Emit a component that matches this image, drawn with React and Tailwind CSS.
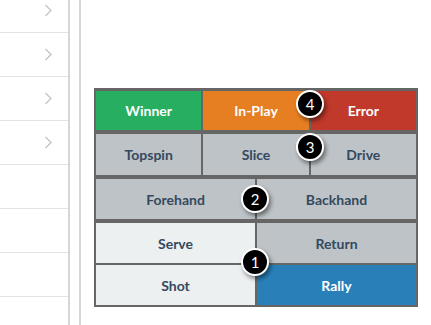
import React from "react";

const Chevron = () => (
  <svg width="9" height="13" viewBox="0 0 9 13" className="block">
    <polyline points="1.5,1 7,6.5 1.5,12" fill="none" stroke="#c4c4c8" strokeWidth="1.3" />
  </svg>
);

const Badge = ({ n, x, y }) => (
  <div
    className="absolute w-[28px] h-[28px] rounded-full bg-black border-2 border-white flex items-center justify-center text-white text-[15px] leading-none shadow-[2px_3px_4px_rgba(0,0,0,0.45)]"
    style={{ left: x - 14, top: y - 14 }}
  >
    {n}
  </div>
);

const Cell = ({ children, cls }) => (
  <div className={`flex items-center justify-center font-bold text-[14px] ${cls}`}>{children}</div>
);

export default function App() {
  const rows = [true, true, true, true, false, false, false, false];
  return (
    <div className="w-[431px] h-[325px] overflow-hidden bg-white flex" style={{ fontFamily: "Lato, 'Liberation Sans', sans-serif" }}>
      <div className="w-[70px] shrink-0 border-r-2 border-[#d6d6d6] flex flex-col">
        <div className="-mt-[11px] flex flex-col">
          {rows.map((c, i) => (
            <div key={i} className="h-[44px] shrink-0 border-b border-[#e3e3e3] flex items-center justify-end pr-[15px]">
              {c && <Chevron />}
            </div>
          ))}
        </div>
      </div>
      <div className="w-[9px] shrink-0" />
      <div className="flex-1 border-l-2 border-[#d6d6d6] pl-[13px] pt-[88px]">
        <div className="relative w-[324px] bg-[#666666] pt-[3px] px-[2px] pb-[2px] flex flex-col">
          <div className="grid grid-cols-3 gap-[2px] h-[39px]">
            <Cell cls="bg-[#27ae60] text-white">Winner</Cell>
            <Cell cls="bg-[#e67e22] text-white">In-Play</Cell>
            <Cell cls="bg-[#c0392b] text-white">Error</Cell>
          </div>
          <div className="grid grid-cols-3 gap-[2px] h-[41px] mt-[4px]">
            <Cell cls="bg-[#bdc3c7] text-[#34495e]">Topspin</Cell>
            <Cell cls="bg-[#bdc3c7] text-[#34495e]">Slice</Cell>
            <Cell cls="bg-[#bdc3c7] text-[#34495e]">Drive</Cell>
          </div>
          <div className="grid grid-cols-2 gap-[2px] h-[40px] mt-[4px]">
            <Cell cls="bg-[#bdc3c7] text-[#34495e]">Forehand</Cell>
            <Cell cls="bg-[#bdc3c7] text-[#34495e]">Backhand</Cell>
          </div>
          <div className="grid grid-cols-2 gap-[2px] h-[40px] mt-[4px]">
            <Cell cls="bg-[#ecf0f1] text-[#34495e]">Serve</Cell>
            <Cell cls="bg-[#bdc3c7] text-[#34495e]">Return</Cell>
          </div>
          <div className="grid grid-cols-2 gap-[2px] h-[40px] mt-[2px]">
            <Cell cls="bg-[#ecf0f1] text-[#34495e]">Shot</Cell>
            <Cell cls="bg-[#2980b9] text-white">Rally</Cell>
          </div>
          <Badge n="4" x={216} y={16} />
          <Badge n="3" x={216} y={59} />
          <Badge n="2" x={161} y={111} />
          <Badge n="1" x={161} y={174} />
        </div>
      </div>
    </div>
  );
}
